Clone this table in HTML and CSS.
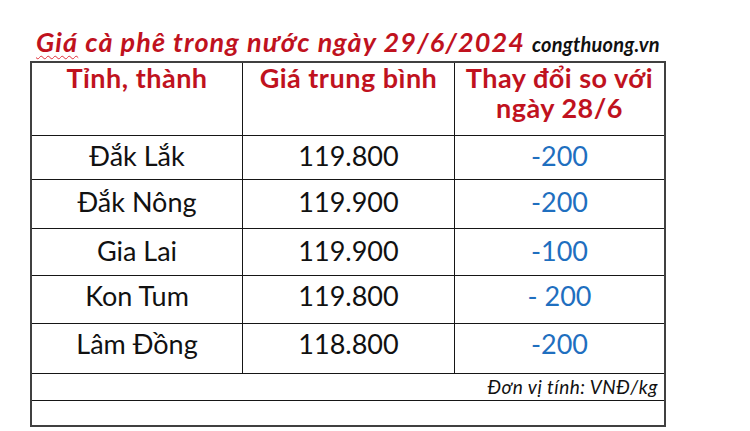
FILE: index.html
```html
<!DOCTYPE html>
<html lang="vi">
<head>
<meta charset="utf-8">
<title>Giá cà phê trong nước ngày 29/6/2024</title>
<link rel="stylesheet" href="styles.css">
</head>
<body>
<div class="page">
  <h1 class="title"><span class="main"><span class="squiggle">Giá</span> cà phê trong nước ngày 29/6/2024</span> <span class="site">congthuong.vn</span></h1>
  <div class="prices" role="table">
    <div class="cell head" role="columnheader">Tỉnh, thành</div>
    <div class="cell head" role="columnheader">Giá trung bình</div>
    <div class="cell head" role="columnheader"><span class="hl">Thay đổi so với</span><span class="hl">ngày 28/6</span></div>

    <div class="cell">Đắk Lắk</div>
    <div class="cell">119.800</div>
    <div class="cell chg">-200</div>

    <div class="cell low">Đắk Nông</div>
    <div class="cell low">119.900</div>
    <div class="cell chg low">-200</div>

    <div class="cell low">Gia Lai</div>
    <div class="cell low">119.900</div>
    <div class="cell chg low">-100</div>

    <div class="cell">Kon Tum</div>
    <div class="cell">119.800</div>
    <div class="cell chg">- 200</div>

    <div class="cell">Lâm Đồng</div>
    <div class="cell">118.800</div>
    <div class="cell chg">-200</div>

    <div class="cell unit">Đơn vị tính: VNĐ/kg</div>
    <div class="cell blank"></div>
  </div>
</div>
</body>
</html>
```

FILE: styles.css
```css
html, body {
  margin: 0;
  padding: 0;
  background: #ffffff;
}

.page {
  width: 750px;
  height: 431px;
  font-family: Lato, "Open Sans", "Liberation Sans", sans-serif;
  overflow: hidden;
}

.title {
  box-sizing: border-box;
  margin: 0;
  padding: 27px 0 0 36px;
  height: 61px;
  font-size: 27px;
  line-height: 30px;
  font-weight: 700;
  font-style: italic;
  letter-spacing: 1.1px;
  white-space: nowrap;
}

.title .main {
  color: #c0121e;
}

.squiggle {
  text-decoration: underline wavy #e0303a;
  text-decoration-thickness: 1px;
  text-underline-offset: 3px;
}

.title .site {
  color: #111111;
  font-size: 20px;
  letter-spacing: 0.2px;
}

.prices {
  display: grid;
  grid-template-columns: 210px 211px 209px;
  grid-template-rows: 72px 43px 48px 46px 47px 49px 26px 24px;
  gap: 1px;
  width: max-content;
  margin-left: 30px;
  background: #161616;
  border: 2px solid #404040;
}

.cell {
  background: #ffffff;
  text-align: center;
  color: #111111;
  font-size: 27px;
  line-height: 30px;
  padding-top: 5px;
  box-sizing: border-box;
}

.cell.low {
  padding-top: 7px;
}

.cell.head {
  color: #c0121e;
  font-weight: 700;
  font-size: 27px;
  line-height: 30px;
  letter-spacing: 0.5px;
  padding-top: 0;
}

.cell.head .hl {
  display: block;
}

.cell.chg {
  color: #1f6fbf;
}

.cell.unit {
  grid-column: 1 / -1;
  padding: 0 6px 0 0;
  text-align: right;
  font-size: 19px;
  line-height: 26px;
  font-style: italic;
  letter-spacing: 0.5px;
}

.cell.blank {
  grid-column: 1 / -1;
  padding: 0;
}
```
